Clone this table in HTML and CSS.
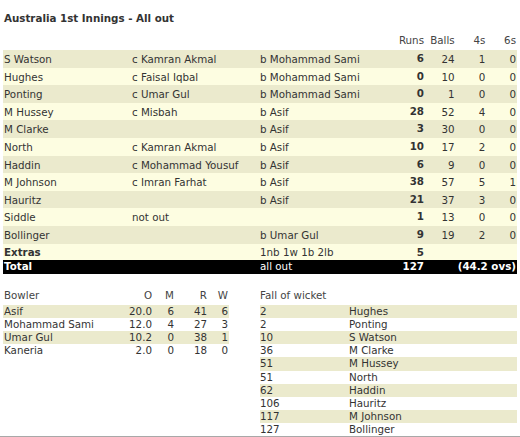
FILE: index.html
```html
<!DOCTYPE html>
<html>
<head>
<meta charset="utf-8">
<link rel="stylesheet" href="styles.css">
</head>
<body>
<div class="page">
  <h2 class="title">Australia 1st Innings - All out</h2>
  <table class="bat">
    <colgroup>
      <col class="c-name"><col class="c-how"><col class="c-bowl"><col class="c-runs"><col class="c-num"><col class="c-num"><col class="c-num">
    </colgroup>
    <thead>
      <tr class="head"><th></th><th></th><th></th><th class="r">Runs</th><th class="r">Balls</th><th class="r">4s</th><th class="r">6s</th></tr>
    </thead>
    <tbody>
      <tr class="odd"><td>S Watson</td><td>c Kamran Akmal</td><td>b Mohammad Sami</td><td class="runs">6</td><td class="r">24</td><td class="r">1</td><td class="r">0</td></tr>
      <tr class="even"><td>Hughes</td><td>c Faisal Iqbal</td><td>b Mohammad Sami</td><td class="runs">0</td><td class="r">10</td><td class="r">0</td><td class="r">0</td></tr>
      <tr class="odd"><td>Ponting</td><td>c Umar Gul</td><td>b Mohammad Sami</td><td class="runs">0</td><td class="r">1</td><td class="r">0</td><td class="r">0</td></tr>
      <tr class="even"><td>M Hussey</td><td>c Misbah</td><td>b Asif</td><td class="runs">28</td><td class="r">52</td><td class="r">4</td><td class="r">0</td></tr>
      <tr class="odd"><td>M Clarke</td><td></td><td>b Asif</td><td class="runs">3</td><td class="r">30</td><td class="r">0</td><td class="r">0</td></tr>
      <tr class="even"><td>North</td><td>c Kamran Akmal</td><td>b Asif</td><td class="runs">10</td><td class="r">17</td><td class="r">2</td><td class="r">0</td></tr>
      <tr class="odd"><td>Haddin</td><td>c Mohammad Yousuf</td><td>b Asif</td><td class="runs">6</td><td class="r">9</td><td class="r">0</td><td class="r">0</td></tr>
      <tr class="even"><td>M Johnson</td><td>c Imran Farhat</td><td>b Asif</td><td class="runs">38</td><td class="r">57</td><td class="r">5</td><td class="r">1</td></tr>
      <tr class="odd"><td>Hauritz</td><td></td><td>b Asif</td><td class="runs">21</td><td class="r">37</td><td class="r">3</td><td class="r">0</td></tr>
      <tr class="even"><td>Siddle</td><td>not out</td><td></td><td class="runs">1</td><td class="r">13</td><td class="r">0</td><td class="r">0</td></tr>
      <tr class="odd"><td>Bollinger</td><td></td><td>b Umar Gul</td><td class="runs">9</td><td class="r">19</td><td class="r">2</td><td class="r">0</td></tr>
      <tr class="extras"><td class="b">Extras</td><td></td><td>1nb 1w 1b 2lb</td><td class="runs">5</td><td></td><td></td><td></td></tr>
      <tr class="total"><td class="b">Total</td><td></td><td>all out</td><td class="runs">127</td><td class="r b" colspan="3">(44.2 ovs)</td></tr>
    </tbody>
  </table>

  <div class="lower">
    <table class="bowl">
      <colgroup><col class="b-name"><col class="b-o"><col class="b-m"><col class="b-r"><col class="b-w"></colgroup>
      <thead>
        <tr class="head"><th>Bowler</th><th class="r">O</th><th class="r">M</th><th class="r">R</th><th class="r">W</th></tr>
      </thead>
      <tbody>
        <tr class="odd"><td>Asif</td><td class="r">20.0</td><td class="r">6</td><td class="r">41</td><td class="r">6</td></tr>
        <tr class="white"><td>Mohammad Sami</td><td class="r">12.0</td><td class="r">4</td><td class="r">27</td><td class="r">3</td></tr>
        <tr class="odd"><td>Umar Gul</td><td class="r">10.2</td><td class="r">0</td><td class="r">38</td><td class="r">1</td></tr>
        <tr class="white"><td>Kaneria</td><td class="r">2.0</td><td class="r">0</td><td class="r">18</td><td class="r">0</td></tr>
      </tbody>
    </table>

    <table class="fow">
      <colgroup><col class="f-score"><col class="f-name"></colgroup>
      <thead>
        <tr class="head"><th colspan="2">Fall of wicket</th></tr>
      </thead>
      <tbody>
        <tr class="odd"><td>2</td><td>Hughes</td></tr>
        <tr class="white"><td>2</td><td>Ponting</td></tr>
        <tr class="odd"><td>10</td><td>S Watson</td></tr>
        <tr class="white"><td>36</td><td>M Clarke</td></tr>
        <tr class="odd"><td>51</td><td>M Hussey</td></tr>
        <tr class="white"><td>51</td><td>North</td></tr>
        <tr class="odd"><td>62</td><td>Haddin</td></tr>
        <tr class="white"><td>106</td><td>Hauritz</td></tr>
        <tr class="odd"><td>117</td><td>M Johnson</td></tr>
        <tr class="white last"><td>127</td><td>Bollinger</td></tr>
      </tbody>
    </table>
  </div>
</div>
</body>
</html>
```

FILE: styles.css
```css
html, body {
  margin: 0;
  padding: 0;
  background: #ffffff;
}

body {
  font-family: "DejaVu Sans", Verdana, sans-serif;
  font-size: 10.3px;
  color: #333333;
}

.page {
  width: 520px;
  height: 437px;
  padding: 0 3px;
  box-sizing: border-box;
  border-bottom: 1px solid #a8a8a8;
  overflow: hidden;
}

.title {
  margin: 11px 0 0 1px;
  font-size: 10.3px;
  line-height: 14px;
  font-weight: bold;
  color: #333333;
}

table {
  border-collapse: collapse;
  border-spacing: 0;
  table-layout: fixed;
}

th {
  font-weight: normal;
  text-align: left;
  color: #444444;
}

td, th {
  padding: 0 1px;
  white-space: nowrap;
  overflow: hidden;
}

.r { text-align: right; }
.b { font-weight: bold; }

/* batting */
.bat {
  width: 514px;
  margin-top: 8px;
}
.c-name { width: 128px; }
.c-how { width: 128px; }
.c-bowl { width: 130px; }
.c-runs { width: 36px; }
.c-num { width: 30.66px; }

.bat .head th {
  height: 17px;
  line-height: 15px;
  vertical-align: top;
}

.bat tbody td {
  height: 16.6px;
  line-height: 16.6px;
  padding-top: 1px;
  padding-bottom: 0;
}

.bat .runs {
  text-align: right;
  font-weight: bold;
  vertical-align: top;
  line-height: 14px;
}

.odd { background: #ebeacd; }
.even { background: #fdfde1; }
.white { background: #ffffff; }

.bat tbody tr.extras td {
  height: 15.7px;
  line-height: 15.7px;
  background: #fdfde1;
}
.bat tbody tr.extras td.runs { line-height: 15px; }

.bat tbody tr.total td {
  height: 13.3px;
  line-height: 13px;
  padding-top: 0;
  background: #000000;
  color: #ffffff;
}
.bat tbody tr.total td.runs { line-height: 13px; }

/* lower tables */
.lower {
  display: flex;
  align-items: flex-start;
  gap: 31px;
  margin-top: 14px;
}

.lower .head th {
  height: 16px;
  line-height: 13px;
  vertical-align: top;
  padding-top: 1px;
}

.lower tbody td {
  height: 13.2px;
  line-height: 13.2px;
}

.bowl { width: 226px; }
.b-name { width: 120px; }
.b-o { width: 30px; }
.b-m { width: 22px; }
.b-r { width: 33px; }
.b-w { width: 21px; }

.fow { width: 257px; }
.f-score { width: 89px; }
.f-name { width: 168px; }

.fow td, .fow th { padding: 0; }
```
